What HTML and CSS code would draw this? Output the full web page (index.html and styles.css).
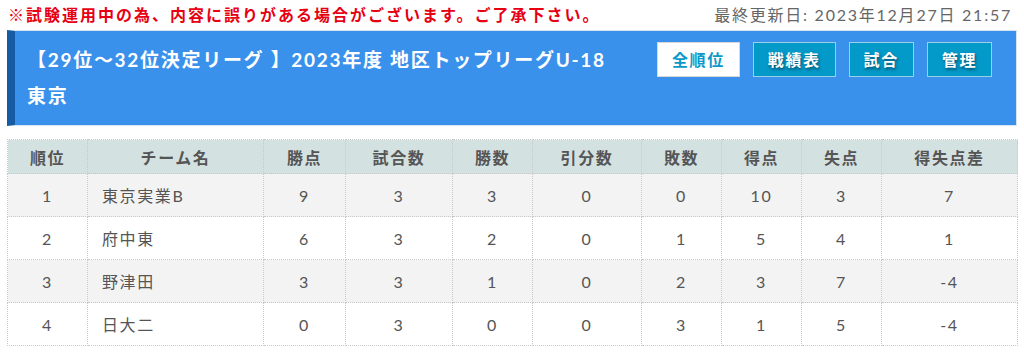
FILE: index.html
```html
<!DOCTYPE html>
<html lang="ja">
<head>
<meta charset="utf-8">
<title>順位表</title>
<link rel="stylesheet" href="styles.css">
</head>
<body>
<div class="page">
  <div class="topbar">
    <p class="notice">※試験運用中の為、内容に誤りがある場合がございます。ご了承下さい。</p>
    <p class="updated">最終更新日: 2023年12月27日 21:57</p>
  </div>
  <div class="league">
    <h1 class="league-title">【29位～32位決定リーグ 】2023年度 地区トップリーグU-18<br>東京</h1>
    <nav class="league-nav">
      <a class="btn btn-active">全順位</a>
      <a class="btn">戦績表</a>
      <a class="btn">試合</a>
      <a class="btn">管理</a>
    </nav>
  </div>
  <table class="standings">
    <colgroup>
      <col class="c-rank"><col class="c-team"><col class="c-pts"><col class="c-gp"><col class="c-w"><col class="c-d"><col class="c-l"><col class="c-gf"><col class="c-ga"><col class="c-gd">
    </colgroup>
    <thead>
      <tr><th>順位</th><th>チーム名</th><th>勝点</th><th>試合数</th><th>勝数</th><th>引分数</th><th>敗数</th><th>得点</th><th>失点</th><th>得失点差</th></tr>
    </thead>
    <tbody>
      <tr><td>1</td><td class="team">東京実業B</td><td>9</td><td>3</td><td>3</td><td>0</td><td>0</td><td>10</td><td>3</td><td>7</td></tr>
      <tr><td>2</td><td class="team">府中東</td><td>6</td><td>3</td><td>2</td><td>0</td><td>1</td><td>5</td><td>4</td><td>1</td></tr>
      <tr><td>3</td><td class="team">野津田</td><td>3</td><td>3</td><td>1</td><td>0</td><td>2</td><td>3</td><td>7</td><td>-4</td></tr>
      <tr><td>4</td><td class="team">日大二</td><td>0</td><td>3</td><td>0</td><td>0</td><td>3</td><td>1</td><td>5</td><td>-4</td></tr>
    </tbody>
  </table>
</div>
</body>
</html>
```
FILE: styles.css
```css
html, body {
  margin: 0;
  padding: 0;
  background: #fff;
}
body {
  font-family: Lato, "Noto Sans CJK JP", sans-serif;
  color: #555;
}
.page {
  padding: 0 7px;
}
.topbar {
  display: flex;
  justify-content: space-between;
  align-items: center;
  height: 30px;
}
.topbar p {
  margin: 0;
  font-size: 16px;
  line-height: 26px;
}
.notice {
  color: #e60012;
  font-weight: bold;
  letter-spacing: 0.125em;
  padding-left: 1px;
}
.updated {
  color: #666;
  letter-spacing: 0.11em;
  padding-right: 5px;
}
.league {
  display: flex;
  align-items: flex-start;
  background: #3991eb;
  border: 1px solid #d6e4f2;
  border-left: 8px solid #165ba3;
  padding: 11px 24px 11px 12px;
}
.league-title {
  flex: 1;
  margin: 0;
  color: #fff;
  font-size: 19px;
  font-weight: bold;
  line-height: 36px;
  letter-spacing: 0.09em;
}
.league-nav {
  display: flex;
  gap: 13px;
}
.btn {
  display: block;
  height: 33px;
  line-height: 33px;
  padding: 0 14px;
  border: 1px solid #9ccfe6;
  background: #0399c9;
  color: #fff;
  font-size: 16px;
  font-weight: bold;
  letter-spacing: 0.1em;
  text-shadow: 1px 2px 3px rgba(0, 0, 0, 0.45);
}
.btn-active {
  background: #fff;
  color: #0a99c9;
  border-color: #d8d8d8;
  text-shadow: none;
}
.standings {
  width: 1010px;
  margin-top: 13px;
  border-collapse: collapse;
  table-layout: fixed;
  font-size: 16px;
  color: #555;
}
.c-rank { width: 80px; }
.c-team { width: 176px; }
.c-pts { width: 82px; }
.c-gp { width: 107px; }
.c-w { width: 80px; }
.c-d { width: 109px; }
.c-l { width: 80px; }
.c-gf { width: 80px; }
.c-ga { width: 80px; }
.c-gd { width: 136px; }
.standings th,
.standings td {
  border: 1px dotted #c8c8c8;
  text-align: center;
  letter-spacing: 0.1em;
  padding: 0;
}
.standings th {
  background: #d4e1e1;
  height: 33px;
  font-weight: bold;
  color: #555;
}
.standings td {
  height: 42px;
}
.standings tbody tr:nth-child(odd) td {
  background: #f3f3f3;
}
.standings td.team {
  text-align: left;
  padding-left: 14px;
}
```
